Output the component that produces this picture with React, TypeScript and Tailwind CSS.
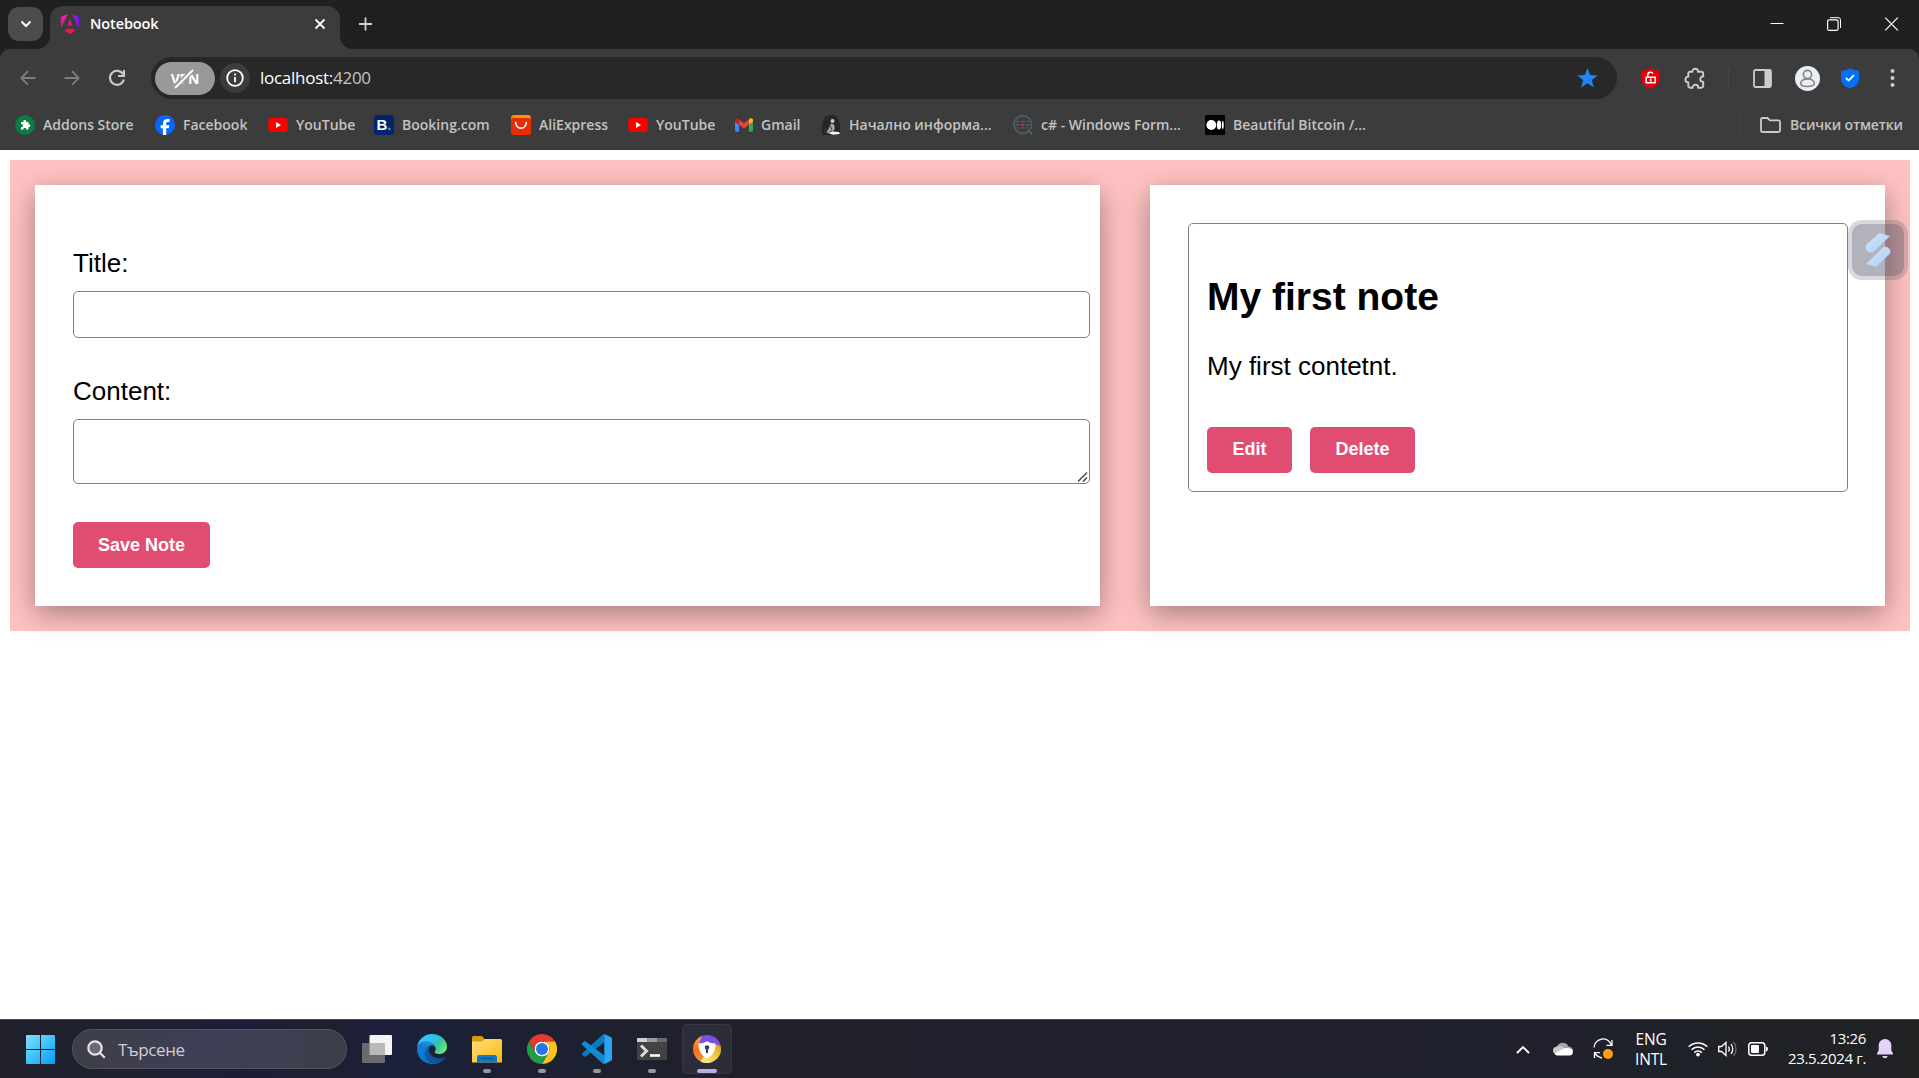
import type { ReactNode } from "react";

/* ---------- Bookmark icons ---------- */

const AddonsIcon = () => (
  <svg width="20" height="20" viewBox="0 0 20 20">
    <circle cx="10" cy="10" r="10" fill="#0a7d44" />
    <path d="M6 7H8.300a1.500 1.500 0 1 1 2.900 0h2.300v2.300a1.400 1.400 0 1 1 0 2.700v2.500h-2.400a1.400 1.400 0 1 0-2.700 0H6v-2.400a1.500 1.500 0 1 0 0-2.900z" fill="#fff" />
  </svg>
);

const FacebookIcon = () => (
  <svg width="20" height="20" viewBox="0 0 20 20">
    <circle cx="10" cy="10" r="10" fill="#0866ff" />
    <path d="M7.900 20v-6.700H5.600v-3h2.300V8.900c0-3.400 1.500-5 4.700-5 .6 0 1.500.1 2 .2v2.800h-1.300c-1.500 0-2.100.6-2.100 2.100v1.300h3.200l-.6 3h-2.600V20z" fill="#fff" />
  </svg>
);

const YouTubeIcon = () => (
  <svg width="20" height="20" viewBox="0 0 20 20">
    <rect x="0.300" y="3" width="19.400" height="14" rx="3.600" fill="#f00" />
    <path d="M8 7v6l5-3z" fill="#fff" />
  </svg>
);

const BookingIcon = () => (
  <span className="flex h-5 w-5 items-baseline justify-center rounded-[3px] bg-[#00256b] font-['Liberation_Sans'] text-[15px] leading-[19px] font-bold text-white">
    B<span className="text-[#2aa5e8]">.</span>
  </span>
);

const AliIcon = () => (
  <svg width="20" height="20" viewBox="0 0 20 20">
    <rect width="20" height="16" rx="3" fill="#ff9000" />
    <path d="M0 5q0-2 2-2h16q2 0 2 2v12.500q0 2.500-2.500 2.500h-15Q0 20 0 17.500z" fill="#e62e04" />
    <path d="M4.700 7.500c.8 7.600 9.800 7.600 10.600 0" fill="none" stroke="#fff" strokeWidth="1.700" strokeLinecap="round" />
  </svg>
);

const GmailIcon = () => (
  <svg width="18" height="14" viewBox="52 42 88 66">
    <path fill="#4285f4" d="M58 108h14V74L52 59v43c0 3.320 2.690 6 6 6" />
    <path fill="#34a853" d="M120 108h14c3.320 0 6-2.690 6-6V59l-20 15" />
    <path fill="#fbbc04" d="M120 48v26l20-15v-8c0-7.420-8.470-11.650-14.400-7.200" />
    <path fill="#ea4335" d="M72 74V48l24 18 24-18v26L96 92" />
    <path fill="#c5221f" d="M52 51v8l20 15V48l-5.600-4.200c-5.940-4.450-14.400-.22-14.400 7.200" />
  </svg>
);

const StatueIcon = () => (
  <svg width="20" height="20" viewBox="0 0 20 20">
    <path d="M1 20C0 8 2 0 10 0s10 8 9 20z" fill="#262626" />
    <circle cx="11.500" cy="6" r="2" fill="#c9c9c9" />
    <path d="M10 8.500l3 1 .8 4-1.800 3-2-1-2 2-3 .5 2.500-4z" fill="#a8a8a8" />
    <path d="M7 18l4-1.500 7 .5 1 2-7 .8z" fill="#f5f5f5" />
    <path d="M9.500 11l1.500 4M5 13l-2 5" stroke="#3a3a3a" />
  </svg>
);

const CSharpIcon = () => (
  <svg width="20" height="20" viewBox="0 0 20 20" fill="none" stroke="#4b5f69">
    <circle cx="9.800" cy="9.600" r="8.800" strokeWidth="1.700" />
    <path d="M15 15l4.200 4.200" strokeWidth="2.200" />
    <path d="M3 6.500h3M7.500 6.500h5M14 6.500h2M2.500 9.700h4.500M12.500 9.700h4M4 12.900h2M7.500 12.900h4M13 12.900h2.500" strokeWidth="1.400" />
    <circle cx="9.700" cy="9.700" r="1.300" fill="#ff1744" stroke="none" />
  </svg>
);

const MediumIcon = () => (
  <svg width="20" height="20" viewBox="0 0 20 20">
    <rect width="20" height="20" rx="1" fill="#000" />
    <circle cx="6.300" cy="10" r="4.900" fill="#fff" />
    <ellipse cx="14" cy="10" rx="2.200" ry="4.600" fill="#fff" />
    <ellipse cx="17.800" cy="10" rx="0.900" ry="4" fill="#fff" />
  </svg>
);

type Bookmark = { label: string; icon: ReactNode; cls: string };

const bookmarks: Bookmark[] = [
  { label: "Addons Store", icon: <AddonsIcon />, cls: "w-[140px]" },
  { label: "Facebook", icon: <FacebookIcon />, cls: "w-[113px]" },
  { label: "YouTube", icon: <YouTubeIcon />, cls: "w-[106px]" },
  { label: "Booking.com", icon: <BookingIcon />, cls: "w-[137px]" },
  { label: "AliExpress", icon: <AliIcon />, cls: "w-[117px]" },
  { label: "YouTube", icon: <YouTubeIcon />, cls: "w-[107px]" },
  { label: "Gmail", icon: <GmailIcon />, cls: "w-[86px]" },
  { label: "Начално информа...", icon: <StatueIcon />, cls: "w-[192px]" },
  { label: "c# - Windows Form...", icon: <CSharpIcon />, cls: "w-[192px]" },
  { label: "Beautiful Bitcoin /...", icon: <MediumIcon />, cls: "w-[180px]" },
];

/* ---------- Browser chrome ---------- */

function TabStrip() {
  return (
    <div className="flex h-[49px] shrink-0 bg-[#202020]">
      <div className="flex w-[50px] pt-[7px] pl-2">
        <div className="flex h-[34px] w-[35px] items-center justify-center rounded-[11px] bg-[#4c4c4c]">
          <svg width="12" height="8" viewBox="0 0 12 8" fill="none" stroke="#fff" strokeWidth="2">
            <path d="M1.500 1.500L6 6l4.500-4.500" />
          </svg>
        </div>
      </div>
      <div className="relative mt-1.5 flex h-[43px] w-[290px] items-center rounded-t-[13px] bg-[#3c3c3c] pr-[14px] pb-[7px] pl-2.5">
        <svg className="absolute bottom-0 -left-[13px]" width="13" height="13">
          <path d="M13 0v13H0A13 13 0 0 0 13 0z" fill="#3c3c3c" />
        </svg>
        <svg className="absolute -right-[13px] bottom-0" width="13" height="13">
          <path d="M0 0v13h13A13 13 0 0 1 0 0z" fill="#3c3c3c" />
        </svg>
        <svg width="20" height="20" viewBox="0 0 223 236">
          <defs>
            <linearGradient id="ng1" x1="0" y1="0.600" x2="1" y2="0.300">
              <stop offset="0" stopColor="#f0169a" />
              <stop offset="0.200" stopColor="#a81fd8" />
              <stop offset="1" stopColor="#6a15f8" />
            </linearGradient>
            <linearGradient id="ng2" x1="0" y1="0" x2="0" y2="1">
              <stop offset="0" stopColor="#f41ed0" />
              <stop offset="0.600" stopColor="#f0128a" />
              <stop offset="1" stopColor="#ff1040" />
            </linearGradient>
          </defs>
          <path fill="url(#ng1)" d="m222.077 39.192-8.019 125.923L137.387 0l84.690 39.192Z" />
          <path fill="#f6134f" d="m168.972 202.017-57.933 33.056-57.934-33.056 11.783-28.556h92.301l11.783 28.556Z" />
          <path fill="url(#ng2)" d="M111.039 62.675l30.357 73.803H80.681l30.358-73.803ZM7.937 165.115 0 39.192 84.690 0 7.937 165.115Z" />
        </svg>
        <span className="ml-2.5 flex-1 text-[14.500px] font-semibold tracking-[-0.100px] text-white">Notebook</span>
        <svg className="mb-px" width="12" height="12" viewBox="0 0 12 12" stroke="#fff" strokeWidth="1.800">
          <path d="M1.500 1.500l9 9M10.500 1.500l-9 9" />
        </svg>
      </div>
      <svg className="mt-[17px] ml-[19px]" width="14" height="14" viewBox="0 0 14 14" stroke="#d2d2d2" strokeWidth="1.800">
        <path d="M6.500 .5v13M0 7h13" />
      </svg>
      <div className="ml-auto flex items-start gap-[43px] pt-[17px] pr-5">
        <svg width="14" height="14" viewBox="0 0 14 14" stroke="#fff">
          <path d="M.5 6.500h13" />
        </svg>
        <svg width="14" height="14" viewBox="0 0 14 14" fill="none" stroke="#fff">
          <rect x="0.600" y="2.800" width="10.500" height="10.500" rx="1.500" strokeWidth="1.200" />
          <path d="M3 .7h8.500a2 2 0 0 1 2 2V11" />
        </svg>
        <svg width="15" height="14" viewBox="0 0 14 14" stroke="#fff" strokeWidth="1.200">
          <path d="M.7.7l12.600 12.600M13.300.7L.7 13.300" />
        </svg>
      </div>
    </div>
  );
}

function Toolbar() {
  return (
    <div className="bg-[#202020]">
      <div className="flex h-[59px] items-center rounded-t-[10px] bg-[#3c3c3c] pb-px">
        <svg className="ml-5" width="16" height="16" viewBox="0 0 16 16" fill="none" stroke="#7d7d7d" strokeWidth="1.800">
          <path d="M15.500 8H1.500M8 1.200L1.300 8 8 14.800" />
        </svg>
        <svg className="ml-[28px]" width="16" height="16" viewBox="0 0 16 16" fill="none" stroke="#7d7d7d" strokeWidth="1.800">
          <path d="M.5 8h14M8 1.200L14.700 8 8 14.800" />
        </svg>
        <svg className="ml-[28px]" width="18" height="18" viewBox="0 0 18 18" fill="none" stroke="#cbcbcb" strokeWidth="2.100">
          <path d="M15 5.200A7 7 0 1 0 15.800 10.500M16 1v6H10" />
        </svg>
        <div className="ml-[25px] flex h-[42px] w-[1466px] items-center rounded-full bg-[#282828] pl-1">
          <div className="relative flex h-[33px] w-[60px] items-center justify-center rounded-full bg-[#999]">
            <span className="text-[14px] font-bold tracking-[-0.300px] text-white">VPN</span>
            <svg className="absolute top-[6px] left-[18px]" width="22" height="22" viewBox="0 0 22 22">
              <path d="M1 19.500L20 2.500" stroke="#999" strokeWidth="5" />
              <path d="M2 20L20 2" stroke="#fff" strokeWidth="2" />
            </svg>
          </div>
          <div className="ml-[5px] flex h-[30px] w-[30px] items-center justify-center rounded-full bg-[#3c3c3c]">
            <svg width="18" height="18" viewBox="0 0 18 18" fill="none" stroke="#fff" strokeWidth="1.800">
              <circle cx="9" cy="9" r="7.800" />
              <path d="M9 8v5.200M9 4.600v1.900" />
            </svg>
          </div>
          <span className="ml-[10px] text-[17px] leading-6 tracking-[-0.270px] text-white">
            localhost:<span className="text-[#c4c4c4]">4200</span>
          </span>
          <svg className="mr-[19px] ml-auto" width="21" height="20" viewBox="0 0 21 20">
            <path d="M10.500 0l2.700 7 7.500.4-5.900 4.700 2 7.400-6.300-4.200-6.300 4.200 2-7.400L.3 7.400l7.500-.4z" fill="#2086f8" />
          </svg>
        </div>
        <svg className="ml-6" width="19" height="21" viewBox="0 0 19 21">
          <path d="M9.500 0Q13 2.500 18.500 2.600V11q0 6.500-9 9.700Q.5 17.500.5 11V2.600Q6 2.500 9.500 0z" fill="#e3000b" />
          <path d="M5.200 9.200h9v5.600h-9zM6.800 9V6.600q0-2.400 2.700-2.400 1.800 0 2.400 1.400" fill="none" stroke="#fff" strokeWidth="1.500" />
          <path d="M9.700 10.500v3" stroke="#fff" strokeWidth="1.600" />
        </svg>
        <svg className="ml-[23px]" width="24" height="24" viewBox="0 0 24 24" fill="none" stroke="#cbcbcb" strokeWidth="1.900">
          <path d="M7 5.700H9.300A2.900 2.900 0 0 1 15.100 5.700H18.500A1.700 1.700 0 0 1 20.200 7.400V10.200A2.900 2.900 0 0 0 20.200 16V20A1.700 1.700 0 0 1 18.500 21.700H15.300A2.900 2.900 0 0 0 9.500 21.700H7A1.700 1.700 0 0 1 5.300 20V16.400A2.900 2.900 0 0 1 5.300 10.600V7.400A1.700 1.700 0 0 1 7 5.700Z" />
        </svg>
        <div className="ml-[21px] h-5 w-px bg-[#474747]" />
        <svg className="ml-[24px]" width="19" height="19" viewBox="0 0 19 19">
          <rect x="1" y="1" width="17" height="17" rx="1.500" fill="none" stroke="#cbcbcb" strokeWidth="1.800" />
          <path d="M11.500 1H18v17h-6.500z" fill="#cbcbcb" />
        </svg>
        <svg className="ml-[23px]" width="25" height="25" viewBox="0 0 25 25" fill="none" stroke="#7c868f" strokeWidth="1.600">
          <circle cx="12.500" cy="12.500" r="12.500" fill="#eceff1" stroke="none" />
          <circle cx="12.500" cy="8.500" r="4.100" />
          <path d="M5.700 17.200c0-2.600 3-4.300 6.800-4.300s6.800 1.700 6.800 4.300-3 3.300-6.800 3.300-6.800-.7-6.800-3.300z" />
        </svg>
        <svg className="ml-[21px]" width="18" height="21" viewBox="0 0 18 21">
          <path d="M9 0Q12 2.500 18 2.800V11q0 6.500-9 9.600Q0 17.500 0 11V2.800Q6 2.500 9 0z" fill="#0670f5" />
          <path d="M4.800 9.800l2.900 2.800 5.200-5.400" fill="none" stroke="#fff" strokeWidth="1.800" />
        </svg>
        <svg className="ml-[31px]" width="5" height="18" viewBox="0 0 5 18" fill="#cbcbcb">
          <circle cx="2.500" cy="2" r="2" />
          <circle cx="2.500" cy="9" r="2" />
          <circle cx="2.500" cy="16" r="2" />
        </svg>
      </div>
    </div>
  );
}

function BookmarksBar() {
  return (
    <div className="flex h-[42px] shrink-0 items-center bg-[#3c3c3c] pb-[9px] pl-[15px] text-[14px] font-semibold text-[#c3c3c3]">
      {bookmarks.map((b, i) => (
        <div key={i} className={`flex shrink-0 items-center ${b.cls}`}>
          {b.icon}
          <span className="ml-2 pb-px whitespace-nowrap">{b.label}</span>
        </div>
      ))}
      <div className="mr-[20px] ml-auto h-5 w-px bg-[#474747]" />
      <svg width="21" height="16" viewBox="0 0 21 16" fill="none" stroke="#cbcbcb" strokeWidth="1.800">
        <path d="M1 2.500Q1 1 2.500 1H7.500l2.500 2.400h8.500q1.500 0 1.500 1.500v8.600q0 1.500-1.500 1.500h-16Q1 15 1 13.500z" />
      </svg>
      <span className="ml-[9px] w-[129px] pb-px tracking-[-0.150px] whitespace-nowrap">Всички отметки</span>
    </div>
  );
}

/* ---------- Page ---------- */

const cardClass = "h-[421px] bg-white shadow-[0_7.5px_27px_0_rgba(0,0,0,0.36)]";

function PinkButton({ children, className = "" }: { children: ReactNode; className?: string }) {
  return (
    <button
      type="button"
      className={`flex h-[46px] items-center justify-center rounded-[5px] bg-[#e14d70] text-[18px] font-bold text-white ${className}`}
    >
      {children}
    </button>
  );
}

function NotebookPage() {
  return (
    <main className="relative min-h-0 flex-1 overflow-hidden bg-white pt-2.5 pl-2.5 font-['Liberation_Sans',sans-serif] text-[26px] leading-[30px] text-black">
      <div className="flex h-[471px] w-[1900px] gap-[50px] bg-[#ffc2c2] p-[25px]">
        <form className={`${cardClass} w-[1065px] pt-[63px] pl-[38px]`}>
          <label className="block">Title:</label>
          <input className="mt-[13px] block h-[47px] w-[1017px] rounded-[5px] border border-[#808080] bg-white" />
          <label className="mt-[38px] block">Content:</label>
          <div className="relative mt-[13px] w-[1017px]">
            <textarea className="block h-[65px] w-full resize-none rounded-[5px] border border-[#808080] bg-white" />
            <svg className="absolute right-[2px] bottom-[2px]" width="11" height="11" viewBox="0 0 11 11" stroke="#4a4a4a" strokeWidth="1.500">
              <path d="M1 10.500L10 1.500M6 10.500L10 6.500" />
            </svg>
          </div>
          <PinkButton className="mt-[38px] w-[137px]">Save Note</PinkButton>
        </form>
        <section className={`${cardClass} w-[735px] pt-[38px] pl-[38px]`}>
          <article className="h-[269px] w-[660px] rounded-[5px] border border-[#808080] pt-[50px] pl-[18px]">
            <h2 className="text-[39px] leading-[45px] font-bold">My first note</h2>
            <p className="mt-8">My first contetnt.</p>
            <div className="mt-[46px] flex gap-[18px]">
              <PinkButton className="w-[85px] pb-[2px]">Edit</PinkButton>
              <PinkButton className="w-[105px] pb-[2px]">Delete</PinkButton>
            </div>
          </article>
        </section>
      </div>
      <div className="absolute top-[70px] left-[1848px] flex h-[60px] w-[60px] items-center justify-center rounded-[14px] bg-[#3c4155]/20">
        <div className="flex h-[52px] w-[52px] shrink-0 items-center justify-center rounded-[10px] bg-[#3c4155]/25">
          <svg width="26" height="34" viewBox="0 0 26 34">
            <defs>
              <linearGradient id="sw" x1="0" y1="0" x2="1" y2="1">
                <stop offset="0" stopColor="#d5e6fa" />
                <stop offset="1" stopColor="#a9cdf5" />
              </linearGradient>
            </defs>
            <path d="M14.500 0L25 3 9 18.500Q5 21 2 18t0-7z" fill="url(#sw)" />
            <path d="M11.500 34L1 31 17 15.500Q21 12 24 15.500t0 6z" fill="url(#sw)" />
          </svg>
        </div>
      </div>
    </main>
  );
}

/* ---------- Taskbar ---------- */

function TaskCell({ children, mark }: { children: ReactNode; mark?: boolean }) {
  return (
    <div className="relative flex h-full w-[55px] items-center justify-center">
      {children}
      {mark && <span className="absolute bottom-[5px] h-1 w-2 rounded-full bg-[#97979f]" />}
    </div>
  );
}

const TaskViewIcon = () => (
  <svg width="30" height="30" viewBox="0 0 30 30">
    <rect x="7.500" y="1" width="22.500" height="20" rx="1" fill="#f4f4f4" />
    <rect x="0" y="9" width="23" height="20" rx="1" fill="#6b6b6b" />
    <path d="M7.500 9H23v12H7.500z" fill="#b9b9b9" />
  </svg>
);

const EdgeIcon = () => (
  <svg width="30" height="30" viewBox="0 0 256 256">
    <defs>
      <linearGradient id="e1" x1="0.200" y1="0" x2="1" y2="0">
        <stop offset="0" stopColor="#0c59a4" />
        <stop offset="1" stopColor="#114a8b" />
      </linearGradient>
      <linearGradient id="e2" x1="0.600" y1="0" x2="0.300" y2="1">
        <stop offset="0" stopColor="#1b9de2" />
        <stop offset="0.300" stopColor="#1380d3" />
        <stop offset="1" stopColor="#0672c8" />
      </linearGradient>
      <linearGradient id="e3" x1="0" y1="0.200" x2="1" y2="0.600">
        <stop offset="0" stopColor="#35c1f1" />
        <stop offset="0.450" stopColor="#34c1ed" />
        <stop offset="0.700" stopColor="#2fc2b0" />
        <stop offset="1" stopColor="#66eb6e" />
      </linearGradient>
    </defs>
    <path fill="url(#e1)" d="M235.700 195.500a93.700 93.700 0 0 1-10.600 4.700 101.900 101.900 0 0 1-35.900 6.400c-47.300 0-88.500-32.500-88.500-74.300a31.500 31.500 0 0 1 16.400-27.300c-42.800 1.800-53.800 46.400-53.800 72.500 0 74 68.100 81.400 82.800 81.400 7.900 0 19.800-2.300 27-4.600l1.300-.4a128.300 128.300 0 0 0 66.600-52.800 4 4 0 0 0-5.300-5.600Z" />
    <path fill="url(#e2)" d="M105.700 241.400a79.200 79.200 0 0 1-22.700-21.300 80.700 80.700 0 0 1 29.500-120c3.200-1.500 8.500-4.100 15.600-4a32.400 32.400 0 0 1 25.700 13 31.900 31.900 0 0 1 6.300 18.700c0-.2 24.500-79.600-80-79.600-43.900 0-80 41.600-80 78.200a130.200 130.200 0 0 0 12.100 56 128 128 0 0 0 156.400 67 75.500 75.500 0 0 1-62.800-8Z" />
    <path fill="url(#e3)" d="M152.300 148.900c-.9 1-3.400 2.500-3.400 5.600 0 2.600 1.700 5.200 4.800 7.300 14.300 10 41.400 8.600 41.500 8.600a59.600 59.600 0 0 0 30.300-8.300 61.400 61.400 0 0 0 30.400-52.900c.3-22.400-8-37.300-11.300-43.900C223.500 23.900 177.700 0 128 0A128 128 0 0 0 0 126.200c.5-36.500 36.800-66 80-66 3.500 0 23.500.3 42 10.100 16.300 8.600 24.900 18.900 30.800 29.200 6.200 10.700 7.300 24.100 7.300 29.500 0 5.300-2.700 13.300-7.800 19.900Z" />
  </svg>
);

const FolderIcon = () => (
  <svg width="30" height="30" viewBox="0 0 30 30">
    <defs>
      <linearGradient id="fo" x1="0" y1="0" x2="1" y2="1">
        <stop offset="0" stopColor="#ffe07a" />
        <stop offset="1" stopColor="#fbb716" />
      </linearGradient>
    </defs>
    <path d="M0 3.500Q0 2 1.500 2H10l3 3.500V9H0z" fill="#d99a0b" />
    <path d="M0 7.500h9.500L13 5h15.500Q30 5 30 6.500v22H0z" fill="url(#fo)" />
    <path d="M5 28.500v-5.300q0-2.200 2.200-2.200h15.600q2.200 0 2.200 2.200v5.300z" fill="#1278c4" />
    <path d="M9 24.500h12" stroke="#0b4f8b" strokeWidth="1.200" />
  </svg>
);

const ChromeIcon = () => (
  <svg width="30" height="30" viewBox="0 0 48 48">
    <circle cx="24" cy="24" r="12.200" fill="#fff" />
    <path fill="#e33b2e" d="M24,12H44.781a23.994,23.994,0,0,0-41.564.003L13.608,30l.009-.002A11.985,11.985,0,0,1,24,12Z" />
    <path fill="#fcc31e" d="M34.391,30.003,24.001,48A23.994,23.994,0,0,0,44.780,12.003H23.999l-.002.009A11.985,11.985,0,0,1,34.391,30.003Z" />
    <path fill="#259b48" d="M13.609,30.003,3.218,12.006A23.994,23.994,0,0,0,24.002,48L34.393,30.003l-.007-.007a11.985,11.985,0,0,1-20.778.007Z" />
    <circle cx="24" cy="24" r="9.600" fill="#2376e8" />
  </svg>
);

const CodeIcon = () => (
  <svg width="30" height="30" viewBox="0 0 24 24">
    <path fill="#0b78bf" d="M23.150 2.587L18.210.21a1.494 1.494 0 0 0-1.705.29l-9.460 8.630-4.120-3.128a.999.999 0 0 0-1.276.057L.327 7.261A1 1 0 0 0 .326 8.740L3.899 12 .326 15.260a1 1 0 0 0 .001 1.479L1.650 17.940a.999.999 0 0 0 1.276.057l4.120-3.128 9.460 8.630a1.492 1.492 0 0 0 1.704.29l4.942-2.377A1.500 1.500 0 0 0 24 20.060V3.939a1.500 1.500 0 0 0-.85-1.352zm-5.146 14.861L10.826 12l7.178-5.448v10.896z" />
    <path fill="#1288d6" d="M1.650 6.060a1 1 0 0 1 1.276-.06L18.004 17.448v6.300a1.500 1.500 0 0 1-1.500-.25L.327 8.740a1 1 0 0 1 0-1.480z" />
    <path fill="#29a5f3" d="M18.004.15l5.146 2.437A1.500 1.500 0 0 1 24 3.940v16.120a1.500 1.500 0 0 1-.85 1.352l-4.940 2.377-.206.050z" />
  </svg>
);

const TerminalIcon = () => (
  <svg width="30" height="30" viewBox="0 0 30 30">
    <rect x="0" y="4" width="30" height="22" rx="1" fill="#434343" />
    <path d="M0 8V5q0-1 1-1h9.500v4z" fill="#d0d0d0" />
    <path d="M10.500 4H20v4h-9.500z" fill="#9a9a9a" />
    <path d="M20 4h9q1 0 1 1v3H20z" fill="#6a6a6a" />
    <path d="M4 11.500l5.500 5.500L4 22.500" fill="none" stroke="#dcdcdc" strokeWidth="3" />
    <path d="M13 21.500h10" stroke="#fff" strokeWidth="2.600" />
  </svg>
);

const SecureBrowserIcon = () => (
  <svg width="28" height="28" viewBox="0 0 28 28">
    <defs>
      <linearGradient id="sb1" x1="0" y1="0" x2="0" y2="1">
        <stop offset="0" stopColor="#ffb347" />
        <stop offset="0.500" stopColor="#ff6a13" />
        <stop offset="1" stopColor="#f79a2a" />
      </linearGradient>
      <linearGradient id="sb2" x1="0" y1="1" x2="1" y2="0">
        <stop offset="0" stopColor="#fff0a0" />
        <stop offset="0.500" stopColor="#f3cf3e" />
        <stop offset="1" stopColor="#d99a1c" />
      </linearGradient>
    </defs>
    <circle cx="14" cy="14" r="14" fill="#7c4ee8" />
    <path d="M9 1A14 14 0 0 0 10 27.400L14 20 6 8z" fill="url(#sb1)" />
    <path d="M27.600 11A14 14 0 0 1 7.500 26.400L13 18 22 9z" fill="url(#sb2)" />
    <path d="M14 6.200q3.500 2.200 8.500 2.200 1 10-8.500 15Q4.500 18.400 5.500 8.400 10.500 8.400 14 6.200z" fill="#fff" />
    <circle cx="14" cy="12.500" r="2.200" fill="#34385c" />
    <path d="M13 13.500h2V18h-2z" fill="#34385c" />
  </svg>
);

function Taskbar() {
  return (
    <footer className="flex h-[59px] shrink-0 items-center border-t border-[#4a4a52] bg-[linear-gradient(90deg,#20212b_0%,#1e2030_8%,#1c1e38_13%,#1e2030_17%,#1b1f3b_20%,#1c2033_25%,#20202b_38%,#1f202d_78%,#202228_90%,#212124_100%)] text-white">
      <svg className="ml-[26px]" width="29" height="29" viewBox="0 0 29 29">
        <defs>
          <linearGradient id="win" x1="0" y1="0" x2="1" y2="1">
            <stop offset="0" stopColor="#84dcfb" />
            <stop offset="0.500" stopColor="#3ec3fb" />
            <stop offset="1" stopColor="#0a97f5" />
          </linearGradient>
        </defs>
        <path fill="url(#win)" d="M1 0h13v14H0V1q0-1 1-1zM15 0h13q1 0 1 1v13H15zM0 15h14v14H1q-1 0-1-1zM15 15h14v13q0 1-1 1H15z" />
      </svg>
      <div className="ml-[17px] flex h-10 w-[275px] items-center rounded-full border border-[#55555f] bg-[linear-gradient(90deg,#3e3e48,#3e3e56_45%,#3e3f50_80%,#3d3d47)] pl-[14px]">
        <svg width="19" height="19" viewBox="0 0 19 19" fill="none" stroke="#e4e4ea" strokeWidth="2.200">
          <circle cx="8" cy="8" r="6.700" fill="#6b6b78" />
          <path d="M12.800 12.800l5 5" />
        </svg>
        <span className="ml-[12px] pt-px text-[17px] tracking-[-0.400px] text-[#cfcfd6]">Търсене</span>
      </div>
      <div className="ml-[2px] flex h-full items-center">
        <TaskCell><TaskViewIcon /></TaskCell>
        <TaskCell><EdgeIcon /></TaskCell>
        <TaskCell mark><FolderIcon /></TaskCell>
        <TaskCell mark><ChromeIcon /></TaskCell>
        <TaskCell mark><CodeIcon /></TaskCell>
        <TaskCell mark><TerminalIcon /></TaskCell>
        <div className="relative ml-[3px] flex h-[50px] w-[50px] items-center justify-center rounded-[5px] border border-white/5 bg-white/6">
          <SecureBrowserIcon />
          <span className="absolute bottom-0 h-1 w-5 rounded-full bg-[#b6aeeb]" />
        </div>
      </div>
      <div className="ml-auto flex h-full items-center">
        <svg width="14" height="9" viewBox="0 0 14 9" fill="none" stroke="#fff" strokeWidth="1.900">
          <path d="M1 8l6-6 6 6" />
        </svg>
        <svg className="ml-[23px]" width="20" height="14" viewBox="0 0 20 14">
          <path d="M3.500 8A6.300 6.300 0 0 1 15.500 4.500q4.500.5 4.500 4.500z" fill="#a5a5a8" />
          <path d="M4 4.500Q8 2 12 7l5 5H4Q0 12 0 8.500t4-4z" fill="#c9c9cc" />
          <path d="M1.500 11.500Q7 9 10.500 6.500 17 5 19.500 8q1.500 5-3 5.500H4q-1.500 0-2.500-2z" fill="#fff" />
        </svg>
        <svg className="ml-5" width="22" height="22" viewBox="0 0 22 22" fill="none" stroke="#fff" strokeWidth="1.300">
          <path d="M1 9.500A9 9 0 0 1 18.500 7M19 2v5.300h-5.500M1.500 20v-5.300H7M1.500 14.700Q4 19 9 20" />
          <circle cx="15" cy="16" r="5" fill="#ff9d0a" stroke="none" />
        </svg>
        <div className="ml-[18px] w-[36px] text-center text-[15.500px] leading-5 tracking-[-0.200px]">
          <div>ENG</div>
          <div>INTL</div>
        </div>
        <svg className="ml-[19px]" width="20" height="16" viewBox="0 0 20 16" fill="none" stroke="#fff" strokeWidth="1.500">
          <path d="M.7 5.800a13 13 0 0 1 18.600 0M3.500 8.800a9 9 0 0 1 13 0M6.300 11.600a5.200 5.200 0 0 1 7.400 0" />
          <circle cx="10" cy="13.600" r="1.900" fill="#fff" stroke="none" />
        </svg>
        <svg className="ml-[10px]" width="20" height="18" viewBox="0 0 20 18" fill="none" stroke="#fff" strokeWidth="1.300">
          <path d="M.7 6.500h2.800L8 2.500v13l-4.500-4H.7z" />
          <path d="M10.500 6.500q1.700 2.500 0 5" />
          <path d="M13 4q3.500 5 0 10" />
          <path d="M15.500 2q5 7 0 14" stroke="#66666c" />
        </svg>
        <svg className="ml-[10px]" width="20" height="14" viewBox="0 0 20 14">
          <rect x="0.800" y="0.800" width="16" height="12.400" rx="2.800" fill="none" stroke="#fff" strokeWidth="1.500" />
          <rect x="3" y="3" width="8" height="8" rx="1" fill="#fff" />
          <path d="M18 4.500q2 .3 2 2.500t-2 2.500z" fill="#fff" />
        </svg>
        <div className="ml-[18px] w-[80px] pb-[2px] text-right text-[15px] leading-5 tracking-[-0.350px] whitespace-nowrap">
          <div>13:26</div>
          <div>23.5.2024 г.</div>
        </div>
        <svg className="mr-[26px] ml-[11px]" width="16" height="20" viewBox="0 0 16 20" fill="#e2d3f8">
          <path d="M8 0a6.300 6.300 0 0 1 6.300 6.300v5L16 14.500q.3 1-.8 1H.8q-1.100 0-.8-1l1.700-3.200v-5A6.300 6.300 0 0 1 8 0z" />
          <path d="M5.300 17h5.400q-.5 2.200-2.700 2.200T5.300 17z" />
        </svg>
      </div>
    </footer>
  );
}

export default function App() {
  return (
    <div className="flex h-[1078px] w-[1919px] flex-col overflow-hidden bg-white font-['Open_Sans','Noto_Sans',sans-serif]">
      <TabStrip />
      <Toolbar />
      <BookmarksBar />
      <NotebookPage />
      <Taskbar />
    </div>
  );
}
